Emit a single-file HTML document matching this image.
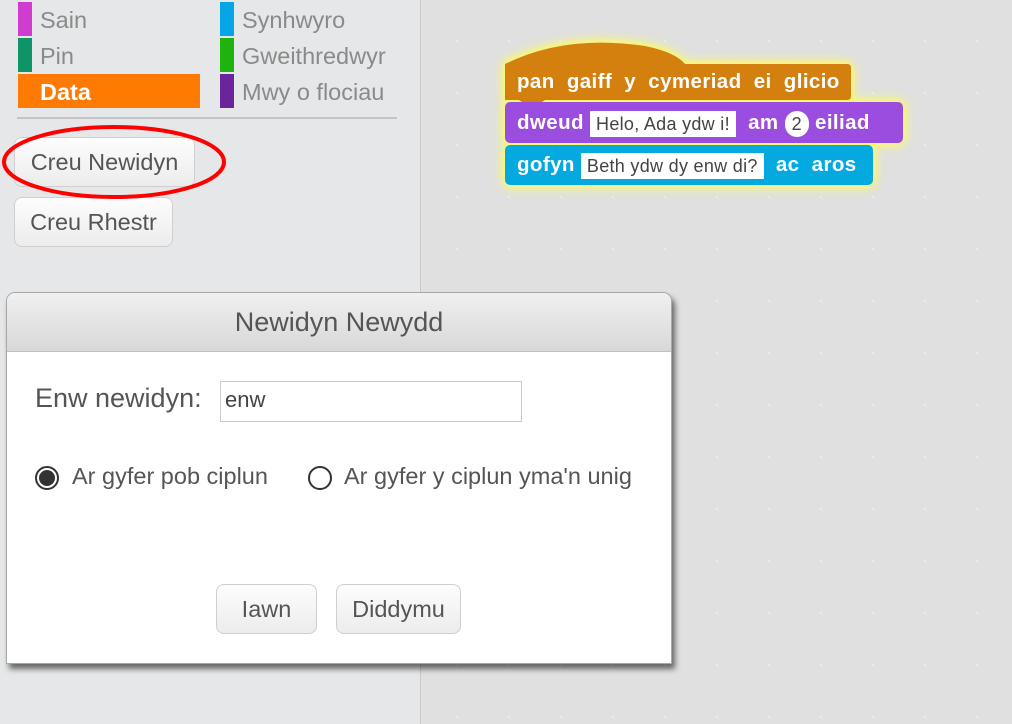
<!DOCTYPE html>
<html><head><style>
body{margin:0;width:1012px;height:724px;overflow:hidden;position:relative;font-family:"Liberation Sans",sans-serif;background:#e0e0e0;}
#pal{position:absolute;left:0;top:0;width:420px;height:724px;background:#e6e7e8;border-right:1px solid #c8c8c8;}
#script{position:absolute;left:421px;top:0;right:0;bottom:0;background-color:#e0e0e0;background-image:radial-gradient(circle,#ebebeb 1px,transparent 1.5px);background-size:52px 52px;background-position:10px 15px;}
.cat{position:absolute;height:34px;font-size:23.5px;color:#8a8a8a;line-height:36px;}
.cat i{position:absolute;left:0;top:0;width:14px;height:34px;}
.cat span{position:absolute;left:22px;white-space:nowrap;}
.btn{position:absolute;background:linear-gradient(#fdfdfd,#ececec);border:1px solid #cfcfcf;border-radius:8px;font-size:23.5px;color:#555;text-align:center;box-sizing:border-box;}
#blocks{position:absolute;left:0;top:0;filter:drop-shadow(0 0 5px #fbfa6a) drop-shadow(0 0 4px #fbfa6a);}
.blk{position:absolute;color:#fff;font-weight:bold;font-size:20.5px;letter-spacing:0.4px;font-family:"Liberation Sans",sans-serif;white-space:nowrap;border-radius:5px;box-sizing:border-box;padding-left:12px;}
.inp{display:inline-block;background:#fff;color:#444;font-weight:normal;font-size:18px;letter-spacing:0.3px;padding:1px 6px;line-height:24px;vertical-align:middle;}
</style></head><body>
<div id="pal">
<div class="cat" style="left:18px;top:2px"><i style="background:#cf3ccf"></i><span>Sain</span></div>
<div class="cat" style="left:18px;top:38px"><i style="background:#0f9467"></i><span>Pin</span></div>
<div class="cat" style="left:18px;top:74px;width:182px;background:#ff7a00;color:#fff;font-weight:bold"><span>Data</span></div>
<div class="cat" style="left:220px;top:2px"><i style="background:#05a5e6"></i><span>Synhwyro</span></div>
<div class="cat" style="left:220px;top:38px"><i style="background:#1fb30f"></i><span>Gweithredwyr</span></div>
<div class="cat" style="left:220px;top:74px"><i style="background:#6a259c"></i><span>Mwy o flociau</span></div>
<div style="position:absolute;left:17px;top:117px;width:380px;height:2px;background:#c4c4c4"></div>
<div class="btn" style="left:14px;top:137px;width:181px;height:50px;line-height:48px">Creu Newidyn</div>
<div class="btn" style="left:14px;top:197px;width:159px;height:50px;line-height:48px">Creu Rhestr</div>
<svg style="position:absolute;left:0;top:115px" width="240" height="96"><ellipse cx="114" cy="47" rx="110" ry="35" fill="none" stroke="#f00" stroke-width="4"/></svg>
</div>
<div id="script"></div>
<div id="blocks">
<svg style="position:absolute;left:505px;top:42px" width="350" height="64"><path d="M0 22 Q60 -8 140 4 Q170 10 180 22 L342 22 Q346 22 346 26 L346 54 Q346 58 342 58 L40 58 L34 62 L20 62 L14 58 L0 58 Z" fill="#d3800f"/></svg>
<div class="blk" style="left:505px;top:102px;width:398px;height:41px;line-height:41px;background:#9a4ddf">dweud <span class="inp">Helo, Ada ydw i!</span>&nbsp; am <span class="inp" style="border-radius:12px;padding:1px 7px">2</span> eiliad</div>
<div class="blk" style="left:505px;top:145px;width:368px;height:40px;line-height:40px;background:#04a9e0">gofyn <span class="inp">Beth ydw dy enw di?</span>&nbsp; ac&nbsp; aros</div>
</div>
<div class="blk" style="left:505px;top:64px;height:36px;line-height:36px;background:transparent">pan&nbsp; gaiff&nbsp; y&nbsp; cymeriad&nbsp; ei&nbsp; glicio</div>
<div style="position:absolute;left:6px;top:292px;width:664px;height:370px;border:1px solid #a8a8a8;border-radius:9px 9px 0 0;background:#fff;box-shadow:3px 5px 6px rgba(0,0,0,0.55);overflow:hidden">
<div style="height:58px;border-bottom:1px solid #c0c0c0;background:linear-gradient(#f0f0f0,#d8d8d8);text-align:center;line-height:58px;font-size:27px;color:#555">Newidyn Newydd</div>
<div style="position:absolute;left:28px;top:90px;font-size:27px;color:#555">Enw newidyn:</div>
<div style="position:absolute;left:213px;top:88px;width:302px;height:41px;border:1px solid #ccc;box-sizing:border-box;font-size:22px;color:#444;line-height:36px;padding-left:4px">enw</div>
<div style="position:absolute;left:28px;top:173px;width:24px;height:24px;border:2px solid #333;border-radius:50%;box-sizing:border-box;background:#fff"><div style="margin:2px;width:16px;height:16px;border-radius:50%;background:#333"></div></div>
<div style="position:absolute;left:65px;top:170px;font-size:23.5px;color:#555">Ar gyfer pob ciplun</div>
<div style="position:absolute;left:301px;top:173px;width:24px;height:24px;border:2px solid #333;border-radius:50%;box-sizing:border-box"></div>
<div style="position:absolute;left:337px;top:170px;font-size:23.5px;color:#555">Ar gyfer y ciplun yma'n unig</div>
<div class="btn" style="left:209px;top:291px;width:101px;height:50px;line-height:48px">Iawn</div>
<div class="btn" style="left:329px;top:291px;width:125px;height:50px;line-height:48px">Diddymu</div>
</div>
</body></html>
